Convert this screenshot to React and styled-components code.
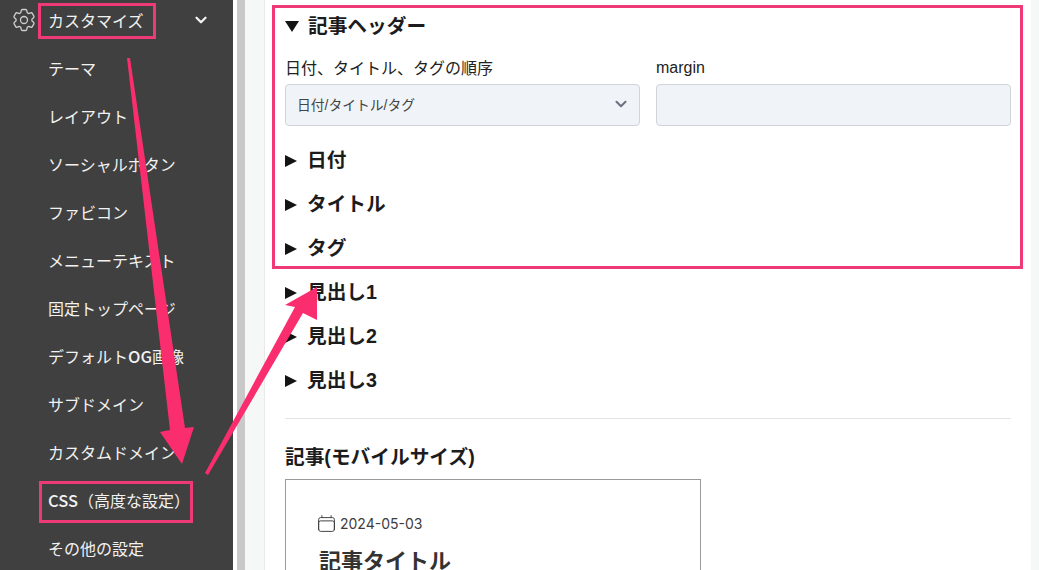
import React from "react";
import styled, { createGlobalStyle } from "styled-components";
import { HiOutlineCog6Tooth, HiOutlineCalendar } from "react-icons/hi2";
import { ChevronDown } from "lucide-react";

const FONT = `"Liberation Sans", "Noto Sans CJK JP", sans-serif`;

const Global = createGlobalStyle`
  html, body { margin: 0; padding: 0; background: #fff; }
  body { font-family: ${FONT}; width: 1039px; height: 570px; overflow: hidden; }
  * { box-sizing: border-box; }
`;

const Page = styled.div`
  position: relative;
  display: flex;
  width: 1039px;
  height: 570px;
  overflow: hidden;
  background: #f6f7f7;
`;

const Sidebar = styled.nav`
  flex: 0 0 233px;
  background: #404040;
  color: #f2f2f2;
  padding-top: 1px;
  margin-top: -5px;
  height: 580px;
`;

const MenuRow = styled.div`
  display: flex;
  align-items: center;
  height: 48px;
  padding-left: ${(p) => (p.$head ? "10px" : "48px")};
  font-size: 16px;
  white-space: nowrap;
`;

const HeadLabel = styled.span`
  margin-left: 10px;
  flex: 0 0 144px;
`;

const Latin = styled.b`
  font-family: "Noto Sans CJK JP", sans-serif;
  font-weight: 500;
  font-size: 16.5px;
`;

const Gutter = styled.div`
  flex: 0 0 12px;
  border-left: 4px solid #fff;
  background-clip: padding-box;
  background-color: #c9c9c9;
`;

const Rail = styled.div`
  flex: 0 0 19px;
  background: #f6f7f7;
`;

const Panel = styled.main`
  flex: 0 0 767px;
  height: 580px;
  padding: 2px 20px 0;
  background: #fff;
  border-left: 1px solid #e9e9e9;
  color: #1c1c1c;
`;

const Summary = styled.div`
  display: flex;
  align-items: center;
  height: 44px;
  gap: ${(p) => (p.$open ? "8px" : "10px")};
  margin-left: -1px;
  font-size: 19.7px;
  font-weight: 700;
`;

const TriangleRight = styled.span`
  width: 0;
  height: 0;
  margin-top: 6px;
  margin-left: 1px;
  border-top: 6.5px solid transparent;
  border-bottom: 6.5px solid transparent;
  border-left: 12px solid #141414;
`;

const TriangleDown = styled.span`
  width: 0;
  height: 0;
  margin-top: 5px;
  margin-left: 1px;
  margin-right: 1px;
  border-left: 7px solid transparent;
  border-right: 7px solid transparent;
  border-top: 11px solid #141414;
`;

const Fields = styled.div`
  display: grid;
  grid-template-columns: 355px 355px;
  column-gap: 16px;
  margin-bottom: 10px;
`;

const Field = styled.div`
  display: flex;
  flex-direction: column;
`;

const Label = styled.label`
  display: flex;
  align-items: center;
  height: 38px;
  padding-top: ${(p) => (p.$latin ? "6px" : "3px")};
  font-size: 16px;
  color: #222;
`;

const Control = styled.div`
  display: flex;
  align-items: center;
  justify-content: space-between;
  height: 42px;
  padding: 0 9px 2px 11px;
  background: #f0f4f8;
  border: 1px solid #ced4d9;
  border-radius: 4px;
  font-size: 13.8px;
  color: #444;
`;

const Rule = styled.hr`
  margin: 18px 0 0;
  border: 0;
  border-top: 1px solid #e4e4e4;
`;

const SectionTitle = styled.h2`
  margin: 0;
  display: flex;
  align-items: center;
  height: 60px;
  padding-top: 13px;
  font-size: 19.7px;
  font-weight: 700;
  color: #1c1c1c;
`;

const Preview = styled.section`
  width: 416px;
  height: 200px;
  padding: 33px 33px 0;
  border: 1px solid #9a9a9a;
`;

const DateRow = styled.div`
  display: flex;
  align-items: center;
  gap: 3px;
  height: 20px;
  margin-left: -3px;
  font-family: "Inter", ${FONT};
  font-size: 14px;
  color: #3d3d3d;
`;

const ArticleTitle = styled.h1`
  margin: 12px 0 0;
  font-size: 22px;
  line-height: 34px;
  font-weight: 700;
  color: #333;
`;

const Mark = styled.div`
  position: absolute;
  border: 3px solid #ef3a77;
  pointer-events: none;
`;

const Arrows = styled.svg`
  position: absolute;
  inset: 0;
  pointer-events: none;
`;

const menu = ["テーマ", "レイアウト", "ソーシャルボタン", "ファビコン", "メニューテキスト", "固定トップページ"];
const menuAfter = ["サブドメイン", "カスタムドメイン"];
const collapsed = ["日付", "タイトル", "タグ", "見出し1", "見出し2", "見出し3"];

export default function App() {
  return (
    <Page>
      <Global />
      <Sidebar>
        <MenuRow $head>
          <HiOutlineCog6Tooth size={28} color="#d0d0d0" strokeWidth={1.1} />
          <HeadLabel>カスタマイズ</HeadLabel>
          <ChevronDown size={18} strokeWidth={3} color="#f2f2f2" />
        </MenuRow>
        {menu.map((m) => (
          <MenuRow key={m}>{m}</MenuRow>
        ))}
        <MenuRow>
          デフォルト<Latin>OG</Latin>画像
        </MenuRow>
        {menuAfter.map((m) => (
          <MenuRow key={m}>{m}</MenuRow>
        ))}
        <MenuRow>
          <Latin>CSS</Latin>（高度な設定）
        </MenuRow>
        <MenuRow>その他の設定</MenuRow>
      </Sidebar>
      <Gutter />
      <Rail />
      <Panel>
        <Summary $open>
          <TriangleDown />
          記事ヘッダー
        </Summary>
        <Fields>
          <Field>
            <Label>日付、タイトル、タグの順序</Label>
            <Control>
              日付/タイトル/タグ
              <ChevronDown size={18} strokeWidth={2.8} color="#6b7280" />
            </Control>
          </Field>
          <Field>
            <Label $latin>margin</Label>
            <Control />
          </Field>
        </Fields>
        {collapsed.map((c) => (
          <Summary key={c}>
            <TriangleRight />
            {c}
          </Summary>
        ))}
        <Rule />
        <SectionTitle>記事(モバイルサイズ)</SectionTitle>
        <Preview>
          <DateRow>
            <HiOutlineCalendar size={21} strokeWidth={1.1} />
            2024-05-03
          </DateRow>
          <ArticleTitle>記事タイトル</ArticleTitle>
        </Preview>
      </Panel>
      <Mark style={{ left: 38, top: 3, width: 118, height: 36 }} />
      <Mark style={{ left: 39, top: 481, width: 154, height: 42 }} />
      <Mark style={{ left: 272, top: 5, width: 751, height: 264 }} />
      <Arrows width="1039" height="570" viewBox="0 0 1039 570">
        <polygon fill="#fa2d6e" points="127,58 130,58 185,428 194,427 182,464 160,432 170,430" />
        <polygon fill="#fa2d6e" points="205,473 295,307 285,305 317,287 317,320 303,313 208,475" />
      </Arrows>
    </Page>
  );
}
